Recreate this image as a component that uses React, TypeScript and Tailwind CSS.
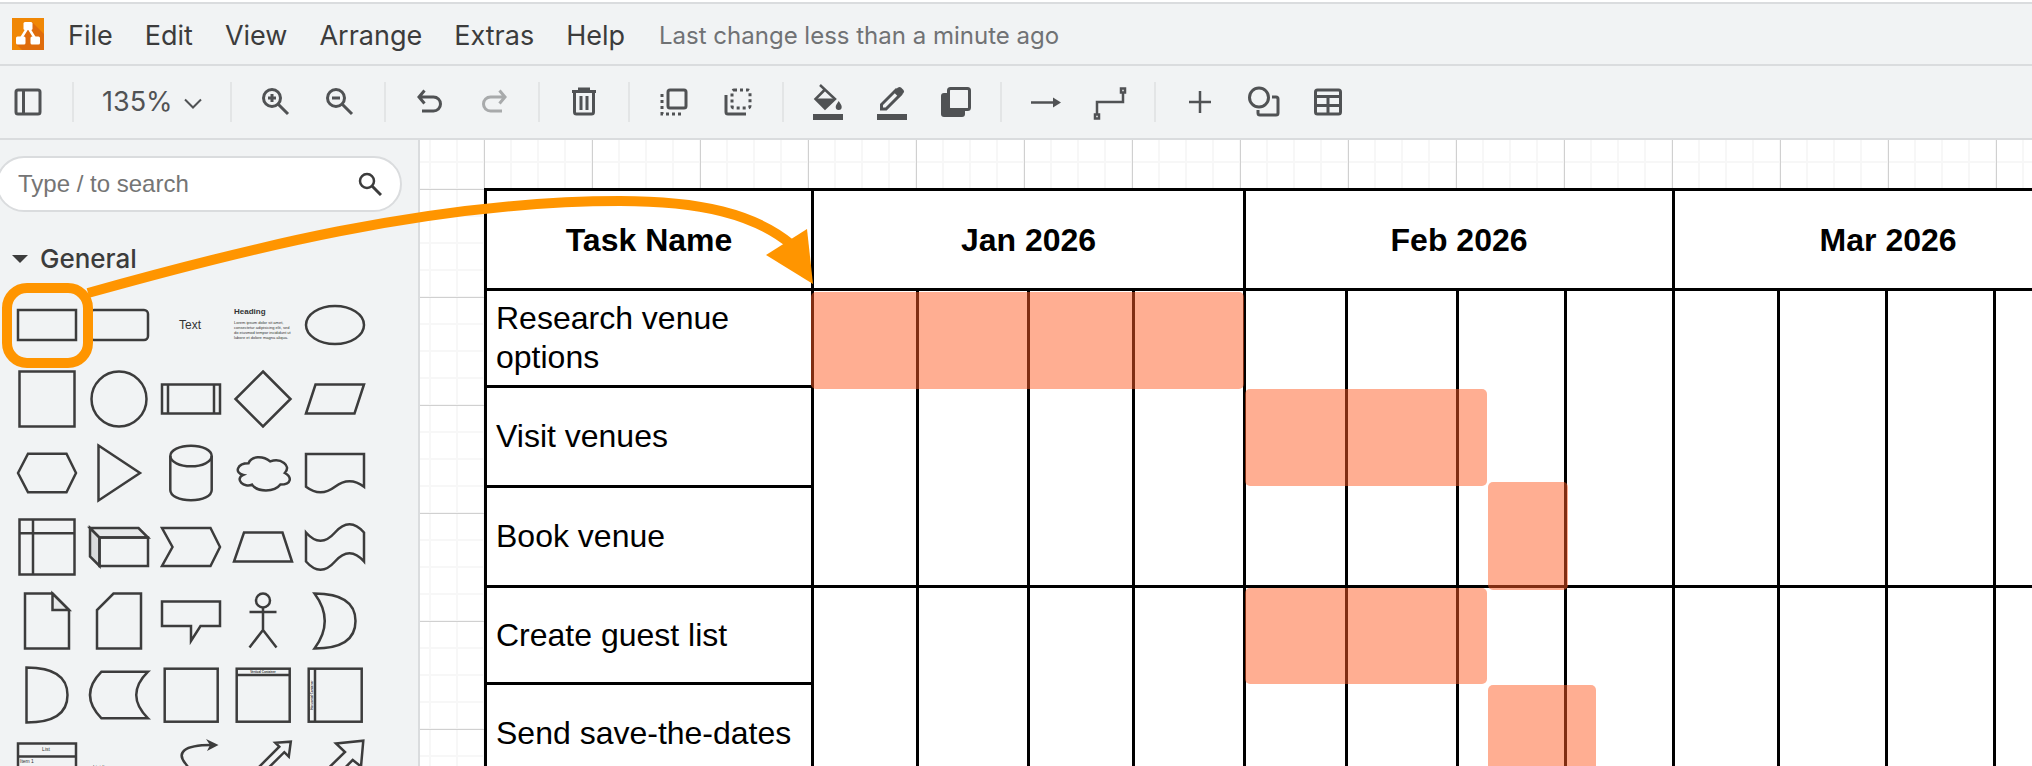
import type { ReactNode } from 'react';

const menuItems = ['File', 'Edit', 'View', 'Arrange', 'Extras', 'Help'];

const loremLines = [
  'Lorem ipsum dolor sit amet,',
  'consectetur adipisicing elit, sed',
  'do eiusmod tempor incididunt ut',
  'labore et dolore magna aliqua.',
];

type Tool = { label: string; icon: ReactNode; disabled?: boolean };

const toolGroups: Tool[][] = [
  [
    {
      label: 'Zoom in',
      icon: (
        <g fill="none" stroke="currentColor" strokeWidth="3">
          <circle cx="14" cy="14" r="8.5" />
          <path d="M20 20l10 10M14 10v8M10 14h8" />
        </g>
      ),
    },
    {
      label: 'Zoom out',
      icon: (
        <g fill="none" stroke="currentColor" strokeWidth="3">
          <circle cx="14" cy="14" r="8.5" />
          <path d="M20 20l10 10M10 14h8" />
        </g>
      ),
    },
  ],
  [
    { label: 'Undo', icon: <path d="M12.500 6.500L7 13l5.500 6.500M7 13h14.500a6.500 6.500 0 0 1 0 14H10" fill="none" stroke="currentColor" strokeWidth="3" /> },
    {
      label: 'Redo',
      disabled: true,
      icon: <path d="M23.500 6.500L29 13l-5.500 6.500M29 13H14.500a6.500 6.500 0 0 0 0 14H26" fill="none" stroke="currentColor" strokeWidth="3" />,
    },
  ],
  [
    {
      label: 'Delete',
      icon: (
        <g fill="none" stroke="currentColor">
          <path d="M8.500 9v19a2 2 0 0 0 2 2h15a2 2 0 0 0 2-2V9" strokeWidth="3" />
          <path d="M6 7.500h24M12 5h12" strokeWidth="3" />
          <path d="M15 12v14M21 12v14" strokeWidth="3" />
        </g>
      ),
    },
  ],
  [
    {
      label: 'To front',
      icon: (
        <g fill="none" stroke="currentColor" strokeWidth="3">
          <rect x="12" y="6" width="18" height="18" rx="2" />
          <path d="M6 10v20h20" strokeDasharray="3 3" />
        </g>
      ),
    },
    {
      label: 'To back',
      icon: (
        <g fill="none" stroke="currentColor" strokeWidth="3">
          <rect x="12" y="6" width="18" height="18" rx="2" strokeDasharray="3 3" />
          <path d="M6 11v17a2 2 0 0 0 2 2h18" />
        </g>
      ),
    },
  ],
  [
    {
      label: 'Fill colour',
      icon: (
        <g>
          <path d="M10 1l15 14-10 9.500L5.500 15l9-9" fill="none" stroke="currentColor" strokeWidth="2.500" />
          <path d="M5 14.500h20l-10 10z" fill="currentColor" />
          <path d="M28.700 17c2 3 3 4.500 3 6a3 3 0 0 1-6 0c0-1.500 1-3 3-6z" fill="currentColor" />
          <path d="M3 30h30v6H3z" fill="currentColor" />
        </g>
      ),
    },
    {
      label: 'Line colour',
      icon: (
        <g>
          <path d="M7.500 25v-4.500L22 6l4.500 4.500L12 25z" fill="none" stroke="currentColor" strokeWidth="3" />
          <path d="M19 7.500L24 3.500q1.500-1 3 0l2.500 2.500q1.200 1.500 0 3L25 13.500z" fill="currentColor" />
          <path d="M3 30h30v6H3z" fill="currentColor" />
        </g>
      ),
    },
    {
      label: 'Shadow',
      icon: (
        <g>
          <rect x="3" y="9" width="24" height="24" rx="3" fill="currentColor" />
          <rect x="10.500" y="4.500" width="21" height="21" rx="2" fill="#f1f3f4" stroke="currentColor" strokeWidth="3" />
        </g>
      ),
    },
  ],
  [
    {
      label: 'Connection',
      icon: (
        <g>
          <path d="M3 18.500h24" stroke="currentColor" strokeWidth="2.500" />
          <path d="M25 13.500l8 5-8 5z" fill="currentColor" />
        </g>
      ),
    },
    {
      label: 'Waypoints',
      icon: (
        <g fill="none" stroke="currentColor" strokeWidth="2.500">
          <path d="M5 30V18h26V9" />
          <rect x="3" y="30.500" width="4" height="4" />
          <rect x="29" y="4.500" width="4" height="4" />
        </g>
      ),
    },
  ],
  [
    { label: 'Insert', icon: <path d="M18 7v22M7 18h22" stroke="currentColor" strokeWidth="2.500" /> },
    {
      label: 'Shapes',
      icon: (
        <g fill="none" stroke="currentColor" strokeWidth="3">
          <circle cx="13" cy="13.500" r="9.500" />
          <path d="M26 13h4a2 2 0 0 1 2 2v14a2 2 0 0 1-2 2H14a2 2 0 0 1-2-2v-3" />
        </g>
      ),
    },
    {
      label: 'Table',
      icon: (
        <g fill="none" stroke="currentColor" strokeWidth="3">
          <rect x="5.500" y="6" width="25" height="24" rx="2" />
          <path d="M5 12.500h26M5 21.500h26M18 13v17" />
        </g>
      ),
    },
  ],
];

// Every palette shape is drawn around the middle of its own 72 x 74 cell.
const shapes: { name: string; art: ReactNode }[] = [
  { name: 'Rectangle', art: <rect x="-29" y="-15" width="58" height="30" /> },
  { name: 'Rounded rectangle', art: <rect x="-29" y="-15" width="58" height="30" rx="4" /> },
  {
    name: 'Text',
    art: (
      <text x="-1" y="4" textAnchor="middle" fontSize="12" fill="#333" stroke="none">
        Text
      </text>
    ),
  },
  {
    name: 'Textbox',
    art: (
      <g fill="#333" stroke="none">
        <text x="-29" y="-11" fontSize="8" fontWeight="bold">
          Heading
        </text>
        {loremLines.map((line, index) => (
          <text key={line} x="-29" y={-1 + index * 5} fontSize="4">
            {line}
          </text>
        ))}
      </g>
    ),
  },
  { name: 'Ellipse', art: <ellipse rx="29" ry="19" /> },
  { name: 'Square', art: <rect x="-27.500" y="-27.500" width="55" height="55" /> },
  { name: 'Circle', art: <circle r="27.500" /> },
  {
    name: 'Process',
    art: (
      <>
        <rect x="-29" y="-14.500" width="58" height="29" />
        <path d="M-23-14.500v29M23-14.500v29" />
      </>
    ),
  },
  { name: 'Diamond', art: <path d="M0-27.500L27.500 0 0 27.500-27.500 0z" /> },
  { name: 'Parallelogram', art: <path d="M-29 14.500L-19.500-14.500H29L19.500 14.500z" /> },
  { name: 'Hexagon', art: <path d="M-29 0l10-19.300h38.500L29 0l-9.500 19.300H-19z" /> },
  { name: 'Triangle', art: <path d="M-20.500-27.500L21 0-20.500 27.500z" /> },
  {
    name: 'Cylinder',
    art: (
      <>
        <ellipse cy="-17" rx="20.700" ry="10.300" />
        <path d="M-20.700-17v34c0 6 9 10.300 20.700 10.300S20.700 23 20.700 17v-34" />
      </>
    ),
  },
  {
    name: 'Cloud',
    art: (
      <path d="M-14.500-9.700C-26.100-9.700-29 0-19.700 1.900C-29 6.200-18.600 15.400-11 11.600C-5.800 19.300 11.600 19.300 17.400 11.600C29 11.600 29 3.900 21.800 0C29-7.700 17.400-15.400 7.300-11.600C0-17.400-11.600-17.400-14.500-9.700z" />
    ),
  },
  { name: 'Document', art: <path d="M-29-19H29V13.700Q14.500 2.700 0 13.700T-29 13.700z" /> },
  {
    name: 'Internal storage',
    art: (
      <>
        <rect x="-27.500" y="-27.500" width="55" height="55" />
        <path d="M-14-27.500v55M-27.500-13.700h55" />
      </>
    ),
  },
  {
    name: 'Cube',
    art: (
      <>
        <path d="M-29-19l9.500 9.500V19L-29 9.500z" fill="#d9dbdc" />
        <path d="M-29-19h48.500L29-9.500h-48.500z" fill="#e6e8e9" />
        <path d="M-19.500-9.500H29V19h-48.500z" />
      </>
    ),
  },
  { name: 'Step', art: <path d="M-29-19h48.500L29 0l-9.500 19H-29l10.500-19z" /> },
  { name: 'Trapezoid', art: <path d="M-19-14.500h38.500l9.500 29h-58z" /> },
  { name: 'Tape', art: <path d="M-29-14.500Q-14.500 2 0-14.500T29-14.500V14.500Q14.500-2 0 14.500T-29 14.500z" /> },
  {
    name: 'Note',
    art: (
      <>
        <path d="M-22-27.500H5.500L22-11v38.500h-44z" />
        <path d="M5.500-27.500V-11H22z" fill="#e6e8e9" />
      </>
    ),
  },
  { name: 'Card', art: <path d="M-5.500-27.500H22v55h-44V-11z" /> },
  { name: 'Callout', art: <path d="M-29-19.500h58V5H9.500L0 20V5h-29z" /> },
  {
    name: 'Actor',
    art: (
      <>
        <circle cy="-20.500" r="7" />
        <path d="M0-13.500V9M-13.500-9h27M-13.500 26.500L0 9l13.500 17.500" />
      </>
    ),
  },
  { name: 'Or', art: <path d="M-20.500-27.500Q20.500-27.500 20.500 0T-20.500 27.500Q0 0-20.500-27.500z" /> },
  { name: 'And', art: <path d="M-20.500-27.500Q20.500-27.500 20.500 0T-20.500 27.500z" /> },
  { name: 'Data storage', art: <path d="M-17.500-23.300H29Q5.500 0 29 23.300H-17.500Q-40.500 0-17.500-23.300z" /> },
  { name: 'Container', art: <rect x="-26.300" y="-26.300" width="53" height="53" /> },
  {
    name: 'Vertical container',
    art: (
      <>
        <rect x="-26.300" y="-26.300" width="53" height="53" />
        <path d="M-26.300-20h53" />
        <text y="-22.500" textAnchor="middle" fontSize="3" fontWeight="bold" fill="#333" stroke="none">
          Vertical Container
        </text>
      </>
    ),
  },
  {
    name: 'Horizontal container',
    art: (
      <>
        <rect x="-26.300" y="-26.300" width="53" height="53" />
        <path d="M-20-26.300v53" />
        <text transform="rotate(-90)" y="-22.500" textAnchor="middle" fontSize="3" fontWeight="bold" fill="#333" stroke="none">
          Horizontal Container
        </text>
      </>
    ),
  },
  {
    name: 'List',
    art: (
      <>
        <path d="M-29 37v-62.500h58V37M-29-12.500h58" />
        <g fill="#333" stroke="none" fontSize="5">
          <text x="-1" y="-18" textAnchor="middle">
            List
          </text>
          <text x="-27" y="-6">
            Item 1
          </text>
        </g>
      </>
    ),
  },
  {
    name: 'List item',
    art: (
      <text x="-26" y="0" fontSize="5" fill="#333" stroke="none">
        List Item
      </text>
    ),
  },
  {
    name: 'Curve',
    art: (
      <>
        <path d="M20-24C-8-24-14-16-6-6C4 6 4 24-26 24" />
        <path d="M27.500-24L15-30l4 6-3 6z" fill="#3c3c3c" stroke="none" />
      </>
    ),
  },
  { name: 'Bidirectional arrow', art: <path d="M-24 18L16.300-22.300l-4-4 15.500-1-2 15-4.500-4.500L-18 22z" /> },
  { name: 'Arrow', art: <path d="M-26 18L10-17l-9-8.500 27.300-2.800L26-2.500 17.700-9-16 25z" /> },
];

const months = ['Jan 2026', 'Feb 2026', 'Mar 2026'];

const tasks = [
  { name: 'Research venue options', height: 'h-[97px]', weekSpan: 3 },
  { name: 'Visit venues', height: 'h-[100px]' },
  { name: 'Book venue', height: 'h-[100px]' },
  { name: 'Create guest list', height: 'h-[97px]', weekSpan: 2 },
  { name: 'Send save-the-dates', height: 'h-[100px]' },
];

const weekWidths = [105, 111, 105, 111, 102, 111, 108, 108, 105, 108, 108, 108];

const bars = [
  { task: 'Research venue options', left: 327, top: 104, width: 433, height: 97 },
  { task: 'Visit venues', left: 761, top: 201, width: 242, height: 97 },
  { task: 'Book venue', left: 1004, top: 294, width: 80, height: 108 },
  { task: 'Create guest list', left: 761, top: 400, width: 242, height: 96 },
  { task: 'Send save-the-dates', left: 1004, top: 497, width: 108, height: 100 },
];

export default function App() {
  return (
    <div className="relative flex h-screen flex-col overflow-hidden bg-white pt-0.5 font-['Inter',sans-serif] text-[#3c3c3c]">
      <MenuBar />
      <Toolbar />
      <div className="flex min-h-0 flex-1">
        <Sidebar />
        <Canvas />
      </div>
      <DragHint />
    </div>
  );
}

function MenuBar() {
  return (
    <header className="flex h-16 shrink-0 items-center border-y-2 border-[#dadcde] bg-[#f1f3f4] pl-3">
      <svg className="h-8 w-8" viewBox="0 0 32 32" role="img" aria-label="draw.io">
        <rect width="32" height="32" fill="#f08705" />
        <path d="M20 4l12 12v16H10L4 26z" fill="#df6c0c" />
        <path d="M16 9L8 22M16 9l8 13" stroke="#fff" strokeWidth="2.500" />
        <rect x="11.500" y="4" width="9" height="8" rx="1.500" fill="#fff" />
        <rect x="4" y="18.500" width="9.500" height="8" rx="1.500" fill="#fff" />
        <rect x="18.500" y="18.500" width="9.500" height="8" rx="1.500" fill="#fff" />
      </svg>
      <nav className="ml-6 flex items-center gap-8 pt-1 text-[27px] leading-8">
        {menuItems.map((item) => (
          <button key={item} type="button">
            {item}
          </button>
        ))}
      </nav>
      <p className="ml-8 pt-1 pl-0.5 text-2xl text-[#707274]">Last change less than a minute ago</p>
    </header>
  );
}

function Toolbar() {
  return (
    <div role="toolbar" className="-ml-1 flex h-[74px] shrink-0 items-center border-b-2 border-[#dadcde] bg-[#f1f3f4] text-[#505254]">
      <ToolButton
        label="Sidebar"
        icon={
          <g fill="none" stroke="currentColor" strokeWidth="3">
            <rect x="6" y="6" width="24" height="24" rx="2" />
            <path d="M13.500 6v24" />
          </g>
        }
      />
      <Separator />
      <div className="relative w-[132px]">
        <select aria-label="Zoom" className="w-full appearance-none bg-transparent pl-4 text-[27px] leading-8" defaultValue="135">
          <option value="135">135%</option>
          <option value="100">100%</option>
        </select>
        <svg className="pointer-events-none absolute top-3 right-4 h-3 w-[18px]" viewBox="0 0 18 12" fill="none" stroke="currentColor" strokeWidth="2">
          <path d="M1 1.500l8 8 8-8" />
        </svg>
      </div>
      {toolGroups.map((tools) => (
        <div key={tools[0].label} className="flex items-center">
          <Separator />
          {tools.map((tool) => (
            <ToolButton key={tool.label} {...tool} />
          ))}
        </div>
      ))}
    </div>
  );
}

function Separator() {
  return <div className="mx-3 h-10 w-0.5 bg-[#e3e5e6]" />;
}

function ToolButton({ label, icon, disabled }: Tool) {
  return (
    <button type="button" aria-label={label} disabled={disabled} className="flex h-12 w-16 items-center justify-center disabled:opacity-45">
      <svg className="h-9 w-9" viewBox="0 0 36 36">
        {icon}
      </svg>
    </button>
  );
}

function Sidebar() {
  return (
    <aside className="w-[420px] shrink-0 overflow-hidden border-r-2 border-[#dadcde] bg-[#f1f3f4] pt-4">
      <label className="-ml-1 flex h-14 w-[406px] items-center rounded-full border-2 border-[#dadcde] bg-white pr-[18px] pl-5">
        <input
          type="text"
          aria-label="Search shapes"
          placeholder="Type / to search"
          className="min-w-0 flex-1 bg-transparent font-['Liberation_Sans',sans-serif] text-2xl outline-none placeholder:text-[#757575]"
        />
        <svg className="h-6 w-6" viewBox="0 0 24 24" fill="none" stroke="#3c3c3c" strokeWidth="2.500">
          <circle cx="9" cy="9" r="7" />
          <path d="M14 14l9 9" strokeWidth="3" />
        </svg>
      </label>
      <button type="button" className="mt-[31px] flex items-center gap-3 pl-3 text-[26px] leading-8 font-medium">
        <svg className="h-4 w-4" viewBox="0 0 16 16">
          <path d="M0 4h16l-8 8z" fill="#3c3c3c" />
        </svg>
        General
      </button>
      <div className="mt-[13px] ml-[11px] grid w-[360px] grid-cols-5">
        {shapes.map(({ name, art }) => (
          <button key={name} type="button" aria-label={name}>
            <svg
              className="block h-[74px] w-[72px] font-['Liberation_Sans',sans-serif]"
              viewBox="-36 -37 72 74"
              fill="none"
              stroke="#3c3c3c"
              strokeWidth="2.500"
            >
              {art}
            </svg>
          </button>
        ))}
      </div>
    </aside>
  );
}

function Canvas() {
  return (
    <main className="min-w-0 flex-1 overflow-hidden bg-[linear-gradient(to_right,#d0d0d0_1px,transparent_1px),linear-gradient(to_bottom,#d0d0d0_1px,transparent_1px),linear-gradient(to_right,#f7f7f7_2px,transparent_2px),linear-gradient(to_bottom,#f7f7f7_2px,transparent_2px)] bg-[size:108px_108px,108px_108px,27px_27px,27px_27px] bg-[position:64px_49px,64px_49px,63px_48px,63px_48px] pt-12 pl-16 font-['Liberation_Sans',sans-serif] text-[32px] leading-[39px] text-black">
      <div className="relative w-[1619px]">
        <table className="w-full table-fixed border-collapse bg-white">
          <colgroup>
            <col className="w-[327px]" />
            {weekWidths.map((width, index) => (
              <col key={index} style={{ width }} />
            ))}
          </colgroup>
          <thead>
            <tr className="h-[100px]">
              <th scope="col" className="border-3 border-black px-0 pt-0.5 pb-0">
                Task Name
              </th>
              {months.map((month) => (
                <th key={month} scope="col" colSpan={4} className="border-3 border-black px-0 pt-0.5 pb-0">
                  {month}
                </th>
              ))}
            </tr>
          </thead>
          <tbody>
            {tasks.map(({ name, height, weekSpan }) => (
              <tr key={name} className={height}>
                <th scope="row" className="border-3 border-black px-[9px] py-0 text-left font-normal">
                  {name}
                </th>
                {weekSpan && weekWidths.map((_, index) => <td key={index} rowSpan={weekSpan} className="border-3 border-black p-0" />)}
              </tr>
            ))}
          </tbody>
        </table>
        {bars.map(({ task, left, top, width, height }) => (
          <div key={task} className="absolute rounded-[5px] bg-[#ff5c25]/50" style={{ left, top, width, height }} />
        ))}
      </div>
    </main>
  );
}

function DragHint() {
  return (
    <svg className="pointer-events-none absolute top-0 left-0 h-[400px] w-[840px]" viewBox="0 0 840 400" fill="none" aria-hidden="true">
      <rect x="7" y="288" width="81" height="75" rx="20" stroke="#ff9500" strokeWidth="10" />
      <path d="M88 293C238 251 430 201 620 201C700 201 755 214 792 245" stroke="#ff9500" strokeWidth="10" />
      <path d="M813 284l-6-55-41 26z" fill="#ff9500" />
    </svg>
  );
}
